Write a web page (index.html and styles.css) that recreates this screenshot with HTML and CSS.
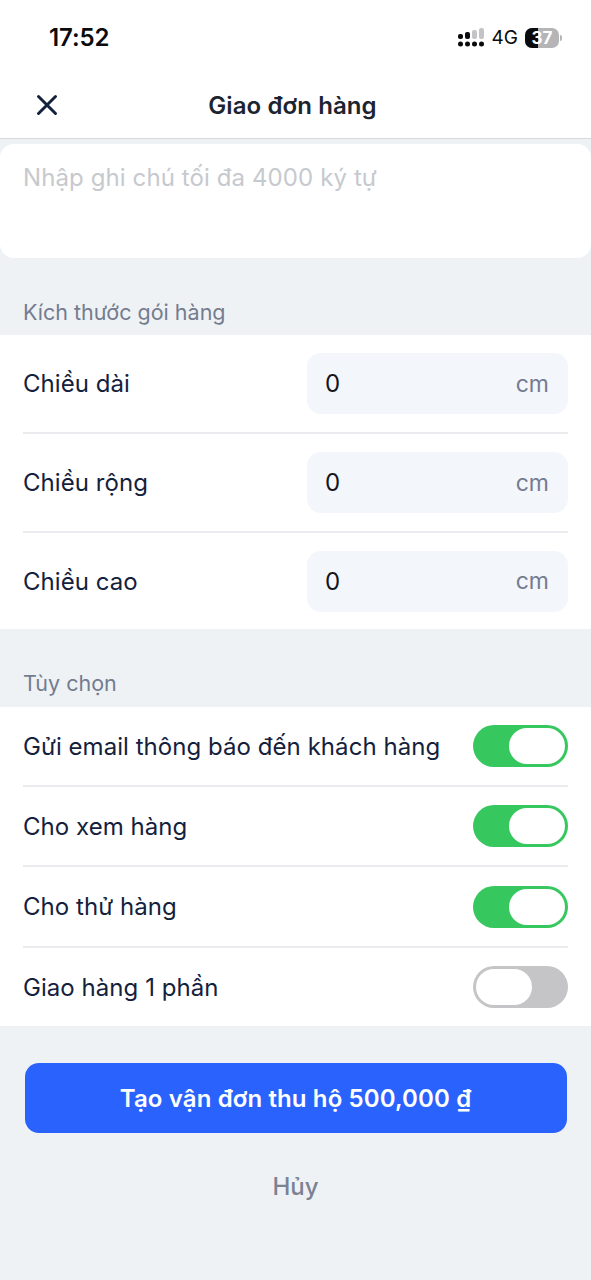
FILE: index.html
```html
<!DOCTYPE html>
<html lang="vi">
<head>
<meta charset="utf-8">
<title>Giao đơn hàng</title>
<link rel="stylesheet" href="styles.css">
</head>
<body>
<div class="top">
  <div class="status">
    <span class="time">17:52</span>
    <div class="status-right">
      <svg class="signal" width="26" height="20" viewBox="0 0 26 20" aria-hidden="true">
        <g fill="#0b0b0d">
          <rect x="0" y="6" width="5" height="5" rx="2"/><rect x="7" y="4" width="5" height="7" rx="2"/>
          <circle cx="2.5" cy="16" r="2.5"/><circle cx="9.5" cy="16" r="2.5"/><circle cx="16.5" cy="16" r="2.5"/><circle cx="23.5" cy="16" r="2.5"/>
        </g>
        <g fill="#c4c4c6">
          <rect x="14" y="2" width="5" height="9" rx="2"/><rect x="21" y="0" width="5" height="11" rx="2"/>
        </g>
      </svg>
      <span class="net">4G</span>
      <div class="battery">
        <div class="battery-body"><div class="battery-fill"></div><span class="battery-num">37</span></div>
        <div class="battery-cap"></div>
      </div>
    </div>
  </div>
  <div class="nav">
    <svg class="close" width="24" height="24" viewBox="0 0 24 24" aria-hidden="true"><path d="M3.5 3.5 L20.5 20.5 M20.5 3.5 L3.5 20.5" stroke="#14213d" stroke-width="3" stroke-linecap="round" fill="none"/></svg>
    <span class="nav-title">Giao đơn hàng</span>
  </div>
</div>

<div class="note">Nhập ghi chú tối đa 4000 ký tự</div>

<div class="section-label size-label">Kích thước gói hàng</div>
<div class="group">
  <div class="dim-row"><span class="row-text">Chiều dài</span><div class="dim-input"><span class="val">0</span><span class="unit">cm</span></div></div>
  <div class="dim-row"><span class="row-text">Chiều rộng</span><div class="dim-input"><span class="val">0</span><span class="unit">cm</span></div></div>
  <div class="dim-row last"><span class="row-text">Chiều cao</span><div class="dim-input"><span class="val">0</span><span class="unit">cm</span></div></div>
</div>

<div class="section-label opt-label">Tùy chọn</div>
<div class="group">
  <div class="opt-row"><span class="row-text">Gửi email thông báo đến khách hàng</span><div class="toggle on"><div class="knob"></div></div></div>
  <div class="opt-row"><span class="row-text">Cho xem hàng</span><div class="toggle on"><div class="knob"></div></div></div>
  <div class="opt-row wide"><span class="row-text">Cho thử hàng</span><div class="toggle on"><div class="knob"></div></div></div>
  <div class="opt-row last"><span class="row-text">Giao hàng 1 phần</span><div class="toggle off"><div class="knob"></div></div></div>
</div>

<div class="actions">
  <div class="primary">Tạo vận đơn thu hộ 500,000 ₫</div>
  <div class="cancel">Hủy</div>
</div>
</body>
</html>
```
FILE: styles.css
```css
* { box-sizing: border-box; }
html, body { margin: 0; padding: 0; }
body {
  width: 591px;
  height: 1280px;
  overflow: hidden;
  background: #eff2f5;
  font-family: Inter, "Noto Sans", sans-serif;
  color: #14213d;
}
.top { background: #fff; height: 139px; border-bottom: 1px solid #d5d8dc; }
.status { height: 75px; display: flex; justify-content: space-between; align-items: center; padding: 0 28px 0 49px; }
.time { font-size: 24px; font-weight: 600; color: #0b0b0d; letter-spacing: -0.1px; }
.status-right { display: flex; align-items: center; gap: 7px; margin-right: 1px; }
.signal { display: block; margin: 1px 1px 0 0; }
.net { font-size: 19px; font-weight: 400; color: #0b0b0d; }
.battery { display: flex; align-items: center; gap: 1px; }
.battery-body { position: relative; width: 34px; height: 20px; border-radius: 7px; background: #b5b5b7; overflow: hidden; text-align: center; }
.battery-fill { position: absolute; left: 0; top: 0; bottom: 0; width: 13px; background: #0b0b0d; }
.battery-num { position: relative; font-size: 17px; line-height: 20px; font-weight: 700; color: #fff; display: block; }
.battery-cap { width: 2px; height: 6px; border-radius: 0 2px 2px 0; background: #b5b5b7; }
.nav { position: relative; height: 63px; display: flex; align-items: center; justify-content: center; }
.close { position: absolute; left: 35px; top: 18px; }
.nav-title { font-size: 24px; font-weight: 600; color: #1c2431; margin: -2px 6px 0 0; letter-spacing: 0.1px; }
.note {
  margin-top: 5px;
  height: 114px;
  padding: 19px 23px 0;
  background: #fff;
  border-radius: 14px;
  font-size: 24px;
  line-height: 29px;
  letter-spacing: 0.1px;
  color: #c6c9ce;
}
.section-label { padding: 0 23px; font-size: 21.5px; line-height: 26px; color: #747c8f; }
.size-label { padding-top: 41px; height: 77px; }
.opt-label { padding-top: 41px; height: 78px; }
.group { background: #fff; padding: 0 23px; }
.row-text { font-size: 24px; letter-spacing: 0.05px; color: #14213d; }
.dim-row { height: 99px; display: flex; align-items: center; justify-content: space-between; border-bottom: 2px solid #e9ebee; }
.dim-row.last { height: 96px; border-bottom: 0; }
.dim-input {
  width: 261px;
  height: 61px;
  padding: 0 19px;
  background: #f3f6fa;
  border-radius: 14px;
  display: flex;
  align-items: center;
  justify-content: space-between;
}
.val { font-size: 24px; color: #14161c; margin-left: -1px; }
.unit { font-size: 23px; color: #747c8f; }
.opt-row { height: 80px; display: flex; align-items: center; justify-content: space-between; border-bottom: 2px solid #e9ebee; }
.opt-row.wide { height: 81px; }
.opt-row.last { height: 78px; border-bottom: 0; }
.toggle { width: 95px; height: 42px; border-radius: 21px; display: flex; align-items: center; padding: 3px; }
.toggle.on { background: #36c75e; justify-content: flex-end; }
.toggle.off { background: #c5c5c7; justify-content: flex-start; }
.knob { width: 56px; height: 36px; border-radius: 18px; background: #fff; }
.actions { padding: 37px 24.5px 0; }
.primary {
  height: 70px;
  border-radius: 14px;
  background: #2a62fe;
  color: #fff;
  font-size: 24px;
  font-weight: 600;
  letter-spacing: 0.12px;
  display: flex;
  align-items: center;
  justify-content: center;
}
.cancel { margin-top: 36px; text-align: center; font-size: 24px; font-weight: 500; line-height: 35px; color: #7a8294; }
```
